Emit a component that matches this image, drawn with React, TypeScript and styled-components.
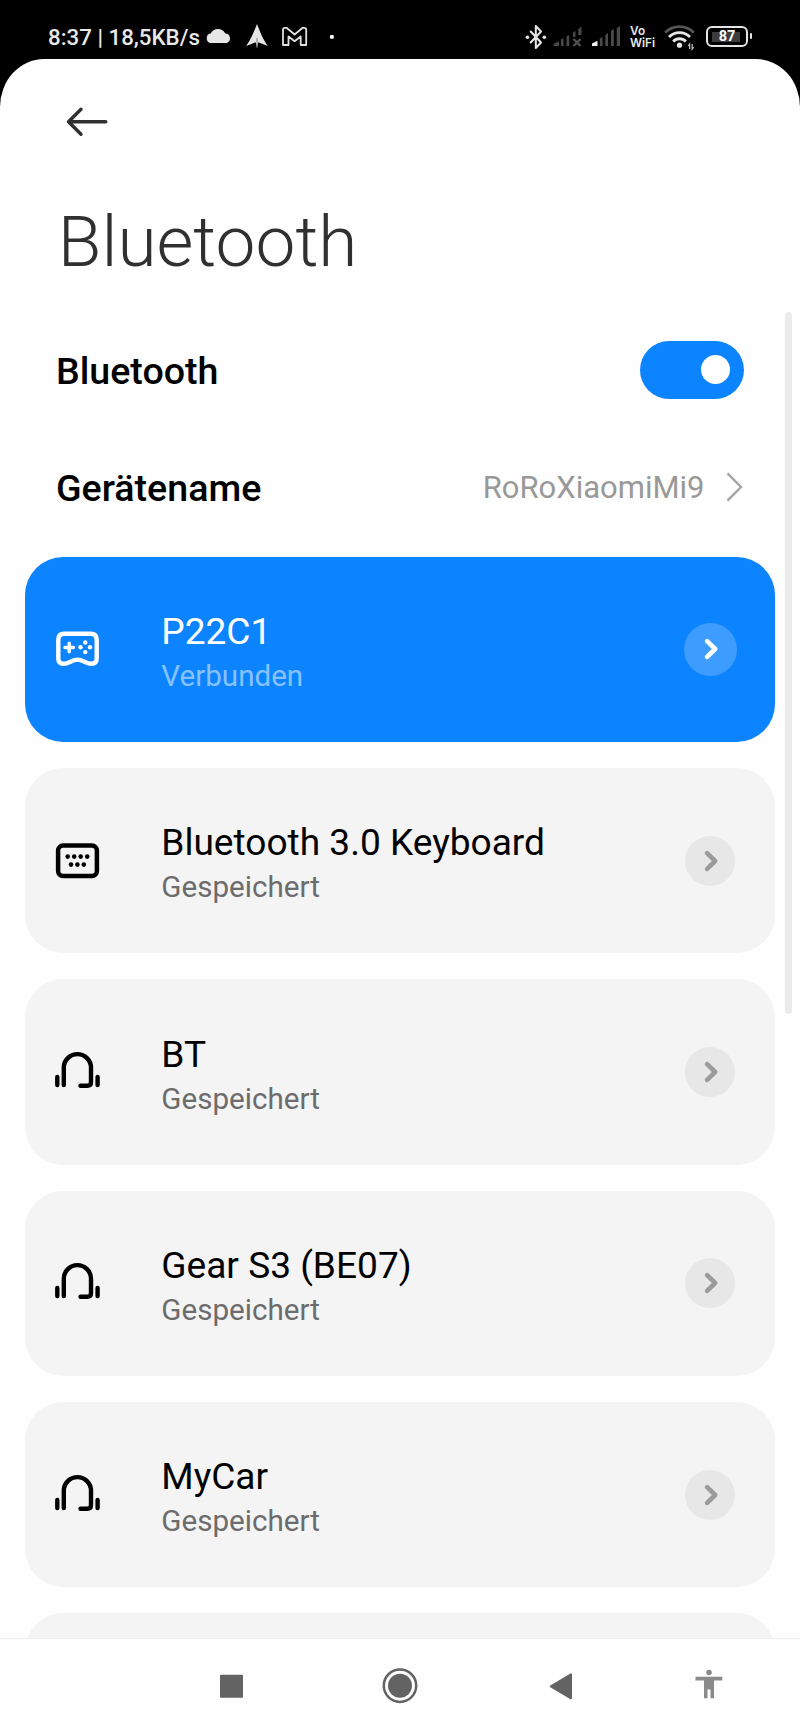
import React from 'react';
import styled, { createGlobalStyle, css } from 'styled-components';

const BLUE = '#0d84ff';

const GlobalStyle = createGlobalStyle`
  * { box-sizing: border-box; }
  body { margin: 0; background: #000; font-family: Roboto, "Liberation Sans", sans-serif; }
  button { border: 0; padding: 0; margin: 0; background: none; font: inherit; }
  svg { display: block; flex: none; }
`;

const Screen = styled.div`
  display: flex;
  flex-direction: column;
  width: 800px;
  height: 1734px;
  overflow: hidden;
  background: #000;
`;

const StatusBar = styled.header`
  display: flex;
  flex: none;
  align-items: flex-start;
  justify-content: space-between;
  height: 59px;
  padding: 22px 48px 0 48px;
  color: #e8e8e8;
`;

const StatusGroup = styled.div`
  display: flex;
  align-items: center;
  height: 30px;
`;

const Clock = styled.span`
  width: 158px;
  font-size: 22.3px;
  font-weight: 500;
  line-height: 30px;
  white-space: nowrap;
`;

const Gap = styled.span<{ $w: number }>`
  flex: none;
  width: ${({ $w }) => $w}px;
`;

const VoWifi = styled.span`
  display: flex;
  flex-direction: column;
  width: 34px;
  padding-top: 1px;
  font-family: Inter, sans-serif;
  font-size: 11.8px;
  font-weight: 600;
  line-height: 11.5px;
`;

const Battery = styled.span`
  position: relative;
  display: flex;
  align-items: center;
  justify-content: center;
  width: 42px;
  height: 21px;
  margin-top: -1px;
  padding-top: 1px;
  border: 2.6px solid #e4e4e4;
  border-radius: 6px;
  color: #fff;
  font-size: 14.5px;
  font-weight: 700;
  line-height: 16px;
  background: linear-gradient(#3c3c3c, #3c3c3c) 4px center / 28px 10px no-repeat;

  &::after {
    content: '';
    position: absolute;
    right: -6px;
    top: 5px;
    width: 2px;
    height: 6px;
    border-radius: 1px;
    background: #e4e4e4;
  }
`;

const Sheet = styled.main`
  position: relative;
  display: flex;
  flex: 1;
  flex-direction: column;
  min-height: 0;
  overflow: hidden;
  border-radius: 44px 44px 0 0 / 48px 48px 0 0;
  background: #fefefe;
`;

const TopBar = styled.div`
  display: flex;
  flex: none;
  align-items: center;
  height: 125px;
  padding-left: 64px;
`;

const Title = styled.h1`
  flex: none;
  margin: 1px 0 12px;
  padding-left: 57.8px;
  color: #303030;
  font-size: 71.2px;
  font-weight: 300;
  line-height: 114px;
`;

const SettingRow = styled.div`
  display: flex;
  flex: none;
  align-items: center;
  justify-content: space-between;
  height: 117px;
  padding: 0 56px;
`;

const SettingLabel = styled.span`
  padding-top: 2px;
  color: #000;
  font-size: 37.6px;
  font-weight: 500;
`;

const Toggle = styled.button`
  display: flex;
  align-items: center;
  justify-content: flex-end;
  width: 104px;
  height: 58px;
  padding-right: 14px;
  border-radius: 29px;
  background: ${BLUE};
`;

const Knob = styled.span`
  width: 29px;
  height: 29px;
  border-radius: 50%;
  background: #fff;
`;

const SettingValue = styled.span`
  display: flex;
  align-items: center;
  gap: 19.5px;
  padding-top: 1px;
  color: #999;
  font-size: 31px;
`;

const DeviceList = styled.ul`
  display: flex;
  flex: none;
  flex-direction: column;
  gap: 25.9px;
  margin: 11.8px 0 0;
  padding: 0 25px 0 25.3px;
  list-style: none;
`;

const DeviceCard = styled.li<{ $active?: boolean }>`
  display: flex;
  align-items: center;
  height: 185.4px;
  padding: 0 37.8px 0 28.7px;
  border-radius: 38px;
  background: #f4f4f4;
  color: #000;
  ${({ $active }) => $active && css`
    background: ${BLUE};
    color: #fff;
  `}
`;

const DeviceText = styled.div`
  display: flex;
  flex: 1;
  flex-direction: column;
  padding: 8.6px 0 0 59.3px;
`;

const DeviceName = styled.span`
  font-size: 37.1px;
  line-height: 45px;
`;

const DeviceState = styled.span<{ $active?: boolean }>`
  color: ${({ $active }) => ($active ? '#86c2ff' : '#6c6c6c')};
  font-size: 29.6px;
  line-height: 44.5px;
`;

const ArrowSlot = styled.div`
  display: flex;
  justify-content: center;
  width: 54px;
`;

const ArrowButton = styled.button<{ $active?: boolean }>`
  display: flex;
  align-items: center;
  justify-content: center;
  width: ${({ $active }) => ($active ? 53 : 50)}px;
  height: ${({ $active }) => ($active ? 53 : 50)}px;
  border-radius: 50%;
  background: ${({ $active }) => ($active ? '#3d9dff' : '#e7e7e7')};
  color: ${({ $active }) => ($active ? '#fff' : '#9b9b9b')};
`;

const ScrollThumb = styled.div`
  position: absolute;
  top: 253px;
  right: 8px;
  width: 7px;
  height: 702px;
  border-radius: 3.5px;
  background: #ebebeb;
`;

const NavBar = styled.nav`
  display: flex;
  flex: none;
  align-items: center;
  height: 96px;
  padding: 0 0 1px 216px;
  border-top: 1px solid #ececec;
  background: #fefefe;
`;

const NavButton = styled.button<{ $after?: number }>`
  margin-right: ${({ $after = 0 }) => $after}px;
`;

const CloudIcon = () => (
  <svg width="26" height="30" viewBox="206 22 26 30" fill="#e6e6e6">
    <path d="M211 43a4.800 4.800 0 0 1-.3-9.500A8 8 0 0 1 225.200 33.500A4.900 4.900 0 0 1 226.800 43Z" />
  </svg>
);

const ArrowheadIcon = () => (
  <svg width="24" height="30" viewBox="245 22 24 30" fill="#e6e6e6">
    <path d="M257 24C260 32 264 41 267.800 46L258.300 42.300L257 48L255.700 42.300L246.200 46C250 41 254 32 257 24Z" />
    <path d="M257 38V48" stroke="#666" strokeWidth=".8" />
  </svg>
);

const MailIcon = () => (
  <svg width="28" height="30" viewBox="281 22 28 30" fill="none" stroke="#e0e0e0" strokeWidth="1.8" strokeLinejoin="round">
    <path d="M283 45V29.500Q283 27.800 285 27.800H286.500L294.600 34.500L302.700 27.800H304.200Q306.200 27.800 306.200 29.500V45H300.700V36.500L294.600 41.200L288.500 36.500V45Z" />
  </svg>
);

const DotIcon = () => (
  <svg width="4" height="30" viewBox="330 22 4 30"><rect x="330" y="35" width="3.8" height="3.8" rx="1" fill="#fff" /></svg>
);

const BluetoothIcon = () => (
  <svg width="22" height="30" viewBox="525 22 22 30" fill="none" stroke="#e6e6e6" strokeWidth="2" strokeLinejoin="round" strokeLinecap="round">
    <path d="M530.700 31.500L541 42.500L535.800 48V26L541 31.500L530.700 42.500" />
    <circle cx="527.4" cy="37.3" r="1.8" fill="#e6e6e6" stroke="none" />
    <circle cx="544.3" cy="37.3" r="1.8" fill="#e6e6e6" stroke="none" />
  </svg>
);

const NoSignalIcon = () => (
  <svg width="29" height="30" viewBox="553 22 29 30" fill="#484848">
    <path d="M553.500 46V44L559 41.300V46Z M561 46V39.500L563.500 38V46Z M566.500 46V36.500L569.200 35V46Z" />
    <path d="M573 37V32.500L575.500 31V37Z M578.300 35V29L581.500 26.500V35Z" />
    <path d="M573.500 39L580.500 46M580.500 39L573.500 46" stroke="#505050" strokeWidth="2.4" />
  </svg>
);

const SignalIcon = () => (
  <svg width="29" height="30" viewBox="592 22 29 30" fill="#4a4a4a">
    <path d="M592 46V43.500L597.500 40.800V46Z" fill="#f0f0f0" />
    <path d="M599.800 46V38.500L602.500 37V46Z M605.300 46V35L608 33V46Z M611 46V31L613.800 29V46Z M616.800 46V28L620 26V46Z" />
  </svg>
);

const WifiIcon = () => (
  <svg width="32" height="30" viewBox="664 22 32 30" fill="none" stroke="#e6e6e6" strokeWidth="2.8">
    <path d="M665.300 32.500A20 20 0 0 1 693.700 32.500" stroke="#555" />
    <path d="M669 37A14.600 14.600 0 0 1 690 37" />
    <path d="M673.200 41.500A8.600 8.600 0 0 1 685.800 41.500" />
    <circle cx="679.5" cy="45.2" r="2.6" fill="#e6e6e6" stroke="none" />
    <path d="M689.600 49V44L688.300 45.800M692.200 44V49L693.600 47.200" stroke="#bbb" strokeWidth="1.3" />
  </svg>
);

const BackIcon = () => (
  <svg width="46" height="32" viewBox="64 105 46 32" fill="none" stroke="#303030" strokeWidth="3.4" strokeLinecap="round" strokeLinejoin="round">
    <path d="M105.800 120.800H68.500M81 108.300L68.500 120.800L81 133.300" />
  </svg>
);

const ValueChevron = () => (
  <svg width="20" height="32" viewBox="724 470 20 32" fill="none" stroke="#a6a6a6" strokeWidth="2.4">
    <path d="M727.500 472.300L741 486L727.500 499.700" />
  </svg>
);

const ArrowChevron = () => (
  <svg width="20" height="26" viewBox="0 0 20 26" fill="none" stroke="currentColor" strokeWidth="4.6" strokeLinecap="round" strokeLinejoin="round">
    <path d="M7.100 5.200L15.200 13L7.100 20.800" />
  </svg>
);

const GamepadIcon = () => (
  <svg width="48" height="48" viewBox="54 625.2 48 48" fill="none" stroke="currentColor" strokeWidth="4.4">
    <path d="M64.300 634H90.700Q96.700 634 96.700 640V658.500Q96.700 664 91.500 664C86 664 83 659.800 77.500 659.800C72 659.800 69 664 63.500 664Q58.300 664 58.300 658.500V640Q58.300 634 64.300 634Z" />
    <path d="M69.200 643.400V652M64.900 647.700H73.500" strokeWidth="3.4" strokeLinecap="round" />
    <g fill="currentColor" stroke="none">
      <circle cx="85.3" cy="642.7" r="2.2" />
      <circle cx="85.3" cy="652.3" r="2.2" />
      <circle cx="80.5" cy="647.5" r="2.2" />
      <circle cx="90" cy="647.5" r="2.2" />
    </g>
  </svg>
);

const KeyboardIcon = () => (
  <svg width="48" height="48" viewBox="54 836.6 48 48">
    <rect x="58.1" y="845.2" width="38.8" height="30.4" rx="5" fill="none" stroke="currentColor" strokeWidth="4.5" />
    <g fill="currentColor">
      {[67.7, 74.2, 80.7, 87.2].map((x) => <circle key={x} cx={x} cy="856.2" r="2.3" />)}
      {[71, 77.4, 83.8].map((x) => <circle key={x} cx={x} cy="864.2" r="2.3" />)}
    </g>
  </svg>
);

const HeadphoneIcon = () => (
  <svg width="48" height="48" viewBox="54 1048 48 48" fill="none" stroke="currentColor" strokeWidth="4.4" strokeLinecap="round">
    <path d="M63.800 1085V1067.700A13.600 13.600 0 0 1 91 1067.700V1082Q91 1085.700 87.300 1085.700H80.500" />
    <path d="M57.300 1077V1085M97.600 1077V1085" />
  </svg>
);

const RecentsIcon = () => (
  <svg width="32" height="36" viewBox="216 1668 32 36"><rect x="220" y="1674.7" width="23" height="23" rx="1" fill="#636363" /></svg>
);

const HomeIcon = () => (
  <svg width="36" height="36" viewBox="382 1668 36 36" fill="#636363">
    <circle cx="400" cy="1685.7" r="16.2" fill="none" stroke="#636363" strokeWidth="2.5" />
    <circle cx="400" cy="1685.7" r="12" />
  </svg>
);

const BackTriangleIcon = () => (
  <svg width="28" height="36" viewBox="546 1668 28 36">
    <path d="M550.800 1686.300L571 1674.300V1698.300Z" fill="#636363" stroke="#636363" strokeWidth="2" strokeLinejoin="round" />
  </svg>
);

const AccessibilityIcon = () => (
  <svg width="30" height="36" viewBox="694 1668 30 36" fill="#8a8a8a">
    <circle cx="709" cy="1672.5" r="2.8" />
    <path d="M695.500 1676.800H722.300V1680.500H714V1698.300H710.500V1689.500H707.500V1698.300H704V1680.500H695.500Z" />
  </svg>
);

const DEVICES = [
  { name: 'P22C1', state: 'Verbunden', Icon: GamepadIcon, active: true },
  { name: 'Bluetooth 3.0 Keyboard', state: 'Gespeichert', Icon: KeyboardIcon },
  { name: 'BT', state: 'Gespeichert', Icon: HeadphoneIcon },
  { name: 'Gear S3 (BE07)', state: 'Gespeichert', Icon: HeadphoneIcon },
  { name: 'MyCar', state: 'Gespeichert', Icon: HeadphoneIcon },
];

export default function App() {
  return (
    <Screen>
      <GlobalStyle />
      <StatusBar>
        <StatusGroup>
          <Clock>8:37 | 18,5KB/s</Clock>
          <CloudIcon />
          <Gap $w={13} />
          <ArrowheadIcon />
          <Gap $w={12} />
          <MailIcon />
          <Gap $w={21} />
          <DotIcon />
        </StatusGroup>
        <StatusGroup>
          <BluetoothIcon />
          <Gap $w={6} />
          <NoSignalIcon />
          <Gap $w={10} />
          <SignalIcon />
          <Gap $w={9} />
          <VoWifi><span>Vo</span><span>WiFi</span></VoWifi>
          <WifiIcon />
          <Gap $w={10} />
          <Battery>87</Battery>
          <Gap $w={4} />
        </StatusGroup>
      </StatusBar>

      <Sheet>
        <TopBar><button aria-label="Zurück"><BackIcon /></button></TopBar>
        <Title>Bluetooth</Title>
        <SettingRow>
          <SettingLabel>Bluetooth</SettingLabel>
          <Toggle role="switch" aria-checked="true" aria-label="Bluetooth"><Knob /></Toggle>
        </SettingRow>
        <SettingRow>
          <SettingLabel>Gerätename</SettingLabel>
          <SettingValue>RoRoXiaomiMi9<ValueChevron /></SettingValue>
        </SettingRow>
        <DeviceList>
          {DEVICES.map(({ name, state, Icon, active }) => (
            <DeviceCard key={name} $active={active}>
              <Icon />
              <DeviceText>
                <DeviceName>{name}</DeviceName>
                <DeviceState $active={active}>{state}</DeviceState>
              </DeviceText>
              <ArrowSlot>
                <ArrowButton $active={active} aria-label="Details"><ArrowChevron /></ArrowButton>
              </ArrowSlot>
            </DeviceCard>
          ))}
          <DeviceCard />
        </DeviceList>
        <ScrollThumb />
      </Sheet>

      <NavBar>
        <NavButton $after={134} aria-label="Letzte Apps"><RecentsIcon /></NavButton>
        <NavButton $after={128} aria-label="Startseite"><HomeIcon /></NavButton>
        <NavButton $after={120} aria-label="Zurück"><BackTriangleIcon /></NavButton>
        <NavButton aria-label="Bedienungshilfen"><AccessibilityIcon /></NavButton>
      </NavBar>
    </Screen>
  );
}
